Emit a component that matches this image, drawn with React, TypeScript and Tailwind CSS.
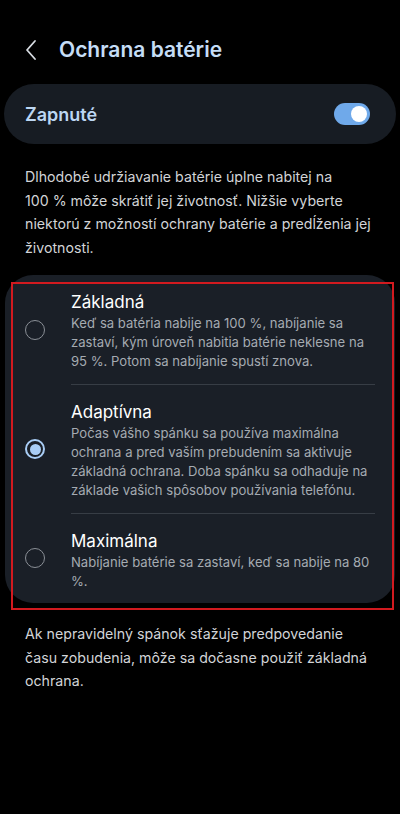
import React from 'react';

interface OptionProps {
  title: string;
  lines: string[];
  selected?: boolean;
  last?: boolean;
}

const Radio: React.FC<{ selected?: boolean }> = ({ selected }) =>
  selected ? (
    <div className="w-5 h-5 rounded-full border-2 border-[#a9cdf5] flex items-center justify-center">
      <div className="w-[11px] h-[11px] rounded-full bg-[#a9cdf5]" />
    </div>
  ) : (
    <div className="w-5 h-5 rounded-full border-[1.5px] border-[#8a8f96]" />
  );

const Option: React.FC<OptionProps> = ({ title, lines, selected, last }) => (
  <div className="flex items-center">
    <div className="w-[66px] pl-[20px] flex-none">
      <Radio selected={selected} />
    </div>
    <div className={`flex-1 mr-[20px] pt-[15px] ${last ? 'pb-[12px]' : 'pb-[13px] border-b border-[#373d45]'}`}>
      <div className="text-[17px] leading-[24px] text-white">{title}</div>
      <div className="text-[13.1px] leading-[19px] text-[#a5abb2] whitespace-nowrap">
        {lines.map((l, i) => (
          <div key={i}>{l}</div>
        ))}
      </div>
    </div>
  </div>
);

export default function App() {
  return (
    <div className="min-h-[814px] bg-black font-['Inter',sans-serif] pt-[30px]">
      <div className="flex items-center h-[40px] pl-[24px]">
        <svg width="16" height="22" viewBox="0 0 16 22" fill="none" className="mr-[19px]">
          <path d="M11 2 L3 11 L11 20" stroke="#d8dde3" strokeWidth="1.8" strokeLinecap="round" strokeLinejoin="round" />
        </svg>
        <h1 className="text-[21px] font-semibold text-[#c5ddf6]">Ochrana batérie</h1>
      </div>

      <div className="mx-[4px] mt-[14px] h-[60px] rounded-full bg-[#171c23] flex items-center justify-between pl-[21px] pr-[26px]">
        <span className="text-[18px] font-semibold text-[#bcd6f2]">Zapnuté</span>
        <div className="w-[36px] h-[22px] rounded-full bg-[#6fa9ea] flex items-center justify-end pr-[3px]">
          <div className="w-[16px] h-[16px] rounded-full bg-white" />
        </div>
      </div>

      <p className="pl-[25px] pt-[21px] text-[14.2px] leading-[23.7px] text-[#d2d4d7] whitespace-nowrap">
        Dlhodobé udržiavanie batérie úplne nabitej na
        <br />
        100 % môže skrátiť jej životnosť. Nižšie vyberte
        <br />
        niektorú z možností ochrany batérie a predĺženia jej
        <br />
        životnosti.
      </p>

      <div className="relative mx-[5px] mt-[15px] rounded-[28px] bg-[#1a1f27]">
        <Option
          title="Základná"
          lines={[
            'Keď sa batéria nabije na 100 %, nabíjanie sa',
            'zastaví, kým úroveň nabitia batérie neklesne na',
            '95 %. Potom sa nabíjanie spustí znova.',
          ]}
        />
        <Option
          selected
          title="Adaptívna"
          lines={[
            'Počas vášho spánku sa používa maximálna',
            'ochrana a pred vaším prebudením sa aktivuje',
            'základná ochrana. Doba spánku sa odhaduje na',
            'základe vašich spôsobov používania telefónu.',
          ]}
        />
        <Option
          last
          title="Maximálna"
          lines={['Nabíjanie batérie sa zastaví, keď sa nabije na 80', '%.']}
        />
        {/* annotation frame */}
        <div className="absolute left-[6px] right-[1px] top-[7px] -bottom-[7px] border-2 border-[#d21a1f] pointer-events-none" />
      </div>

      <p className="pl-[25px] pt-[19px] text-[14.2px] leading-[23.7px] text-[#d2d4d7] whitespace-nowrap">
        Ak nepravidelný spánok sťažuje predpovedanie
        <br />
        času zobudenia, môže sa dočasne použiť základná
        <br />
        ochrana.
      </p>
    </div>
  );
}
